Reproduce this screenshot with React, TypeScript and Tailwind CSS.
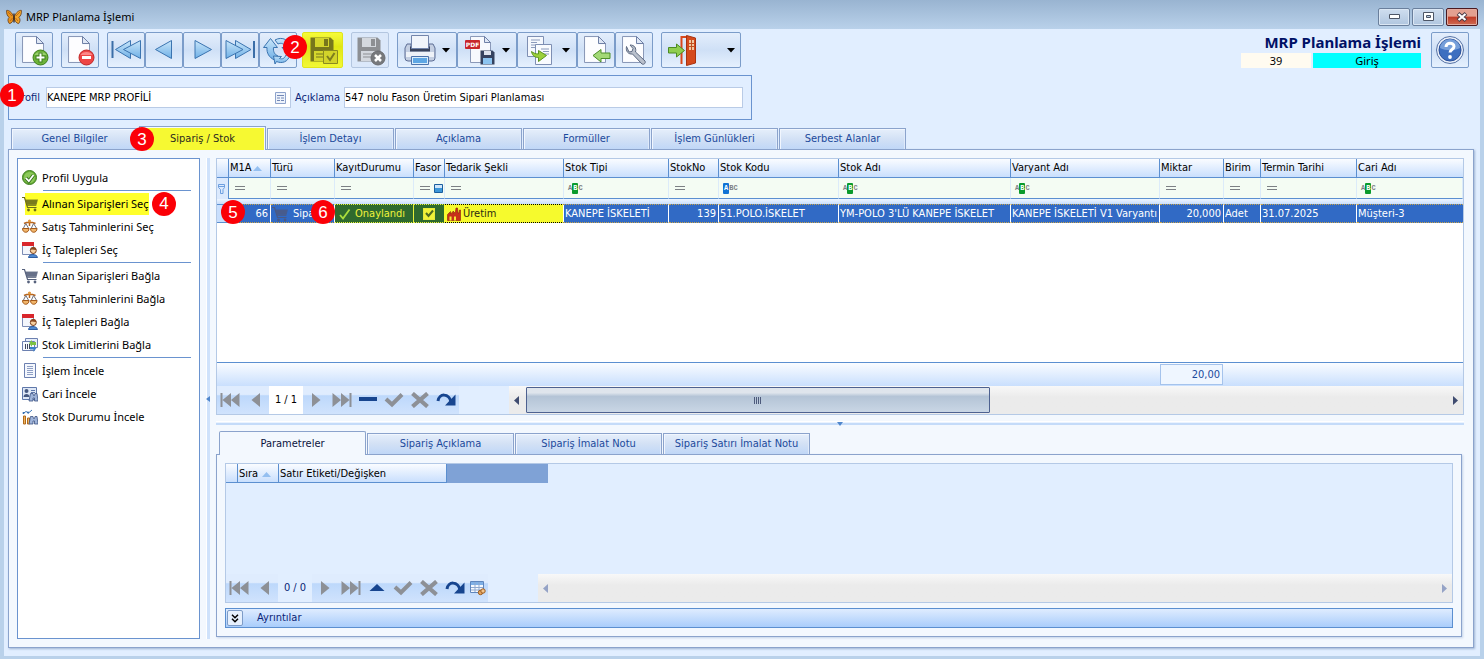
import type { ReactNode } from 'react';

type IconProps = { className?: string };

/* ---------- Small drawings ---------- */

const Butterfly = () => (
  <svg width="16" height="16" viewBox="0 0 16 16" aria-hidden="true">
    <path d="M7.600 7.500C6 3.500 3 1 .6 1.400c-.4 2.600.6 6 2.600 7-1.800 1.200-1.600 4.400.2 6.200C5.800 14.400 7.400 11.500 7.800 9z" fill="#e8931c" stroke="#5a2f10" strokeWidth=".7" />
    <path d="M8.400 7.500C10 3.500 13 1 15.400 1.400c.4 2.600-.6 6-2.600 7 1.800 1.200 1.600 4.400-.2 6.200C10.200 14.400 8.600 11.500 8.200 9z" fill="#f0a52c" stroke="#5a2f10" strokeWidth=".7" />
    <path d="M8 4.500v9" stroke="#2b1a10" strokeWidth="1.200" />
    <path d="M2 3l4 4M14 3l-4 4M4 12l2.500-3M12 12L9.500 9" stroke="#b55a12" strokeWidth=".8" />
  </svg>
);

const Sheet = ({ children }: { children?: ReactNode }) => (
  <svg width="32" height="32" viewBox="0 0 32 32" aria-hidden="true">
    <path d="M4.500 2.500h14l7 7v19h-21z" fill="#f7f9fd" stroke="#8b99b8" />
    <path d="M6 4h12v7h7v16H6z" fill="#fff" opacity=".7" />
    <path d="M18.500 2.500v7h7z" fill="#dfe7f5" stroke="#6f80a6" />
    {children}
  </svg>
);

const NewIcon = () => (
  <Sheet>
    <circle cx="22.500" cy="23.500" r="7.500" fill="#6db33a" stroke="#3f7f1c" />
    <path d="M16.500 21a6.500 5 0 0112 0z" fill="#a5d67c" opacity=".8" />
    <path d="M22.500 18.500v10M17.500 23.500h10" stroke="#3f7f1c" strokeWidth="4" />
    <path d="M22.500 19.500v8M18.500 23.500h8" stroke="#fff" strokeWidth="2" />
  </Sheet>
);

const DeleteIcon = () => (
  <Sheet>
    <circle cx="22.500" cy="23.500" r="7.500" fill="#ee4545" stroke="#c02626" />
    <path d="M16.500 21a6.500 5 0 0112 0z" fill="#f99" opacity=".8" />
    <path d="M18 23.500h9" stroke="#fff" strokeWidth="3" />
  </Sheet>
);

const Blue = () => (
  <defs>
    <linearGradient id="bl" x1="0" y1="0" x2="0" y2="1">
      <stop offset="0" stopColor="#c9e6fa" />
      <stop offset="1" stopColor="#6fb0e6" />
    </linearGradient>
  </defs>
);

const FirstIcon = () => (
  <svg width="32" height="32" viewBox="0 0 32 32" aria-hidden="true">
    <Blue />
    <path d="M2.500 7v17" stroke="#3b6ea8" strokeWidth="2" />
    <path d="M20.500 6.500v18L5.500 15.500z" fill="url(#bl)" stroke="#3b74b0" />
    <path d="M30.500 6.500v18L13.500 15.500z" fill="url(#bl)" stroke="#3b74b0" />
  </svg>
);
const LastIcon = () => (
  <svg width="32" height="32" viewBox="0 0 32 32" aria-hidden="true">
    <path d="M30 7v17" stroke="#3b6ea8" strokeWidth="2" />
    <path d="M11.500 6.500v18L27 15.500z" fill="url(#bl)" stroke="#3b74b0" />
    <path d="M2 6.500v18L19 15.500z" fill="url(#bl)" stroke="#3b74b0" />
  </svg>
);
const PrevIcon = () => (
  <svg width="32" height="32" viewBox="0 0 32 32" aria-hidden="true">
    <path d="M23.500 6.500v18L7.500 15.500z" fill="url(#bl)" stroke="#3b74b0" />
  </svg>
);
const NextIcon = () => (
  <svg width="32" height="32" viewBox="0 0 32 32" aria-hidden="true">
    <path d="M9 6.500v18L25.500 15.500z" fill="url(#bl)" stroke="#3b74b0" />
  </svg>
);
const RefreshIcon = () => (
  <svg width="32" height="32" viewBox="0 0 32 32" aria-hidden="true">
    <g fill="url(#bl)" stroke="#3b74b0" strokeLinejoin="round">
      <path d="M8.500 4.500l7 9h-4c-.5 4 1 7 4.500 8.500l-3.500 4C7 23.500 4.500 19 5 13.500H1.500z" />
      <path d="M13 6c7-4 15 0 15.500 7.500H31L26.500 20 20 13.500h3.500c-1-4-4.500-5-7.500-3.500z" />
      <path d="M28 21c-2 7-8 9-13.500 6.500L13 30l-1.500-8 8 .5-2 2c3 1 5 0 6.500-3.500z" />
    </g>
  </svg>
);

const Floppy = ({ body, label, children }: { body: string; label: string; children: ReactNode }) => (
  <svg width="32" height="32" viewBox="0 0 32 32" aria-hidden="true">
    <path d="M3.500 3.500h20l3 3v21h-23z" fill={body} />
    <path d="M8 4h14v9H8z" fill={label} />
    <path d="M17 5h4v7h-4z" fill={body} />
    <path d="M7 17h16v10H7z" fill={label} />
    <path d="M9 20h12M9 23h12" stroke={body} />
    {children}
  </svg>
);
const SaveIcon = () => (
  <Floppy body="#77771c" label="#d5d62c">
    <path d="M16.500 16.500h14v13h-14z" fill="#d2d32a" stroke="#8a8a20" />
    <path d="M20 22l3 4 4.500-7" fill="none" stroke="#7d7d1e" strokeWidth="2" />
  </Floppy>
);
const CancelIcon = () => (
  <Floppy body="#8d8f93" label="#d4d8de">
    <circle cx="24" cy="24" r="7" fill="#77797c" stroke="#6a6c70" />
    <path d="M21 21l6 6M27 21l-6 6" stroke="#fff" strokeWidth="2.500" />
  </Floppy>
);

const PrintIcon = () => (
  <svg width="32" height="32" viewBox="0 0 32 32" aria-hidden="true">
    <path d="M3 10h4v4h18v-4h4l2 4v10q0 3-3 3H4q-3 0-3-3V14z" fill="#c4cfe2" stroke="#5c6d94" />
    <path d="M6 12.500h20v5H6z" fill="#39435c" />
    <path d="M7.500 1.500h17v13h-17z" fill="#f1f5fb" stroke="#7385ab" />
    <path d="M2 18h28v5H2z" fill="#eef2f8" />
    <path d="M7.500 22.500h17v8h-17z" fill="#dbeefc" stroke="#4d73ab" />
    <path d="M9 24h14v5H9z" fill="#5ea7e4" />
  </svg>
);
const PdfIcon = () => (
  <svg width="32" height="32" viewBox="0 0 32 32" aria-hidden="true">
    <path d="M6.500 2.500h14l6 6v20h-20z" fill="#f7f9fd" stroke="#8b99b8" />
    <path d="M20.500 2.500v6h6z" fill="#dfe7f5" stroke="#6f80a6" />
    <rect x="1" y="6" width="15" height="9" rx="1" fill="#c8252c" />
    <text x="8.500" y="13" fontSize="6" fontWeight="700" textAnchor="middle" fill="#fff" fontFamily="DejaVu Sans">PDF</text>
    <path d="M16.500 16.500h12l2 2v12h-14z" fill="#35425f" />
    <path d="M20 17h7v4h-7z" fill="#dde3ee" />
    <path d="M19 24h9v6h-9z" fill="#8cc4f0" />
  </svg>
);
const CopyIcon = () => (
  <svg width="32" height="32" viewBox="0 0 32 32" aria-hidden="true">
    <path d="M3.500 2.500h16v20h-16z" fill="#f5f8fd" stroke="#7e8fb3" />
    <path d="M7 6h9M7 8.500h6M7 11h9M7 13.500h6" stroke="#8b9abb" />
    <path d="M11.500 10.500h16v20h-16z" fill="#f9fbfe" stroke="#7e8fb3" />
    <path d="M17 15h8M19 17.500h6M20 20h5" stroke="#8b9abb" />
    <path d="M7.500 17.500c1 5 4 6 7 6v4l8-6-8-5v3.500c-3 0-5-1-7-2.500z" fill="#9bcf3a" stroke="#5a9420" />
  </svg>
);
const ImportIcon = () => (
  <Sheet>
    <path d="M13 21.500l8-6v3.500h9v5.500h-9V28z" fill="#a3d977" stroke="#4d8f2a" />
  </Sheet>
);
const ToolsIcon = () => (
  <Sheet>
    <path d="M8.500 12.500c-1 5 2 8 6 7.500l9.500 10c2 1 4-1 3-3L17.500 18c1-4-1-7-5.500-7l3 3.500-1 3-3 .5z" fill="#b9c0cc" stroke="#5c6880" />
  </Sheet>
);
const DoorIcon = () => (
  <svg width="32" height="32" viewBox="0 0 32 32" aria-hidden="true">
    <path d="M14.500 30V3h7" fill="none" stroke="#d9481c" strokeWidth="2" />
    <path d="M19.500 1.500l9 2.500v25l-9 2.500z" fill="#d54a1c" stroke="#a83210" />
    <path d="M22 6h5v10h-5z" fill="#f2c9a2" />
    <path d="M24.500 6v10M22 9.500h5M22 12.500h5" stroke="#c05020" />
    <path d="M1.500 13.500h8V10l8 6.500-8 6.500v-4h-8z" fill="#8fce4f" stroke="#4b8a22" />
  </svg>
);
const HelpIcon = () => (
  <svg width="32" height="32" viewBox="0 0 32 32" aria-hidden="true">
    <circle cx="16" cy="16" r="13.500" fill="#e8eef8" stroke="#5673a6" />
    <circle cx="16" cy="16" r="11" fill="#3d6fc0" stroke="#2a509a" />
    <path d="M6 14a10 9 0 0120 0c-6 3-14 3-20 0z" fill="#8fb4e6" opacity=".7" />
    <path d="M12 13c0-5 8-5 8-.5 0 3-4 3-4 6" fill="none" stroke="#fff" strokeWidth="3" />
    <circle cx="16" cy="23" r="1.900" fill="#fff" />
  </svg>
);

const Caret = () => (
  <svg width="8" height="5" viewBox="0 0 8 5" aria-hidden="true">
    <path d="M0 0h8L4 4.500z" fill="#000" />
  </svg>
);

/* ---------- 16px icons ---------- */

const ApplyIcon = () => (
  <svg width="16" height="16" viewBox="0 0 16 16" aria-hidden="true">
    <circle cx="7.500" cy="7.500" r="7" fill="#69ad36" stroke="#3d7f1e" />
    <circle cx="7.500" cy="7.500" r="5.500" fill="#8cc95a" />
    <path d="M3.800 8l3 3.200L11.500 5" fill="none" stroke="#35701a" strokeWidth="3.500" />
    <path d="M3.800 8l3 3.200L11.500 5" fill="none" stroke="#fff" strokeWidth="1.800" />
  </svg>
);
const CartIcon = ({ color = '#56617c' }: { color?: string }) => (
  <svg width="16" height="16" viewBox="0 0 16 16" aria-hidden="true" className="shrink-0">
    <path d="M0 1.500h2.500l3 10h9" fill="none" stroke={color} strokeWidth="1.200" />
    <path d="M3.200 3.500H16l-1.800 6.500H5.200z" fill={color} opacity=".8" />
    <path d="M4 5h11M4.500 7h10" stroke={color} />
    <circle cx="6.500" cy="14" r="1.400" fill={color} />
    <circle cx="13" cy="14" r="1.400" fill={color} />
  </svg>
);
const ScaleIcon = () => (
  <svg width="16" height="16" viewBox="0 0 16 16" aria-hidden="true">
    <path d="M7.500 1v6M2 4.500c3-1.500 8-1.500 11.500 0" fill="none" stroke="#b9651c" strokeWidth="1.500" />
    <path d="M3.800 4.500L1 10h6zM11.500 4.500L9 10h6z" fill="none" stroke="#6b6f7c" />
    <path d="M.5 9.500h6.500c0 5-6.500 5-6.500 0zM8.500 9.500H15c0 5-6.500 5-6.500 0z" fill="#f0b56a" stroke="#a55a1a" />
    <circle cx="7.500" cy="2" r="1.500" fill="#e39a3e" />
  </svg>
);
const RequestIcon = () => (
  <svg width="16" height="16" viewBox="0 0 16 16" aria-hidden="true">
    <path d="M.5.5h11v12H.5z" fill="#f3f6fc" stroke="#7c8cb5" />
    <path d="M0 0h12v4H0z" fill="#d9262c" />
    <path d="M6.500 15.500c0-4 8.500-4 9 0z" fill="#4f8ad2" stroke="#2f5da0" />
    <circle cx="11.300" cy="8.500" r="3" fill="#f5cfa0" stroke="#7a3f1c" />
    <path d="M8.300 8c0-4 6-4 6 0-2 .5-4-1.500-6 0z" fill="#8a4a22" />
  </svg>
);
const LimitIcon = () => (
  <svg width="16" height="16" viewBox="0 0 16 16" aria-hidden="true">
    <path d="M3.500 1.500h12v9h-12z" fill="#e7eefa" stroke="#6c80b0" />
    <path d="M.5 4.500h12v9H.5z" fill="#f6f9fe" stroke="#6c80b0" />
    <path d="M3.500 7v5M5.500 7v5M7.500 7v5" stroke="#3f4860" />
    <path d="M7 6l3-3v2h4v3h-4v2z" fill="#7cc243" />
    <path d="M14.500 11l-3 4v-2.500H8V10h4z" fill="#3b7fc8" />
  </svg>
);
const ListIcon = () => (
  <svg width="16" height="16" viewBox="0 0 16 16" aria-hidden="true">
    <path d="M2.500.5h11v14h-11z" fill="#f4f7fd" stroke="#6c80b0" />
    <path d="M5 3.500h6M5 5.500h6M5 7.500h6M5 9.500h6M5 11.500h6" stroke="#8f9fc4" />
  </svg>
);
const Binoculars = () => (
  <g>
    <path d="M8.500 7.500h2.500l.5 2h1l.5-2H15l1 7.500h-3.500v-3h-1.500v3H7z" fill="#9fb4d9" stroke="#3d5484" strokeWidth=".8" />
  </g>
);
const CardIcon = () => (
  <svg width="16" height="16" viewBox="0 0 16 16" aria-hidden="true">
    <path d="M.5 1.500h14v12H.5z" fill="#dfe8f6" stroke="#5f78aa" />
    <circle cx="4.500" cy="5" r="2" fill="#46587f" />
    <path d="M1.500 11c0-4 6-4 6 0z" fill="#46587f" />
    <path d="M9 4.500h4M9 6.500h4" stroke="#5f78aa" />
    <Binoculars />
  </svg>
);
const StockIcon = () => (
  <svg width="16" height="16" viewBox="0 0 16 16" aria-hidden="true">
    <path d="M1.500 7h2v8h-2z" fill="#f0b45c" stroke="#b06a1c" />
    <path d="M5.500 9h2v6h-2z" fill="#f0b45c" stroke="#b06a1c" />
    <path d="M1 4.500l3-2 2.500 1.500L10 1" fill="none" stroke="#3c77b8" />
    <circle cx="1.500" cy="4" r="1" fill="#2f68ac" />
    <circle cx="6" cy="3.500" r="1" fill="#2f68ac" />
    <Binoculars />
  </svg>
);
const FactoryIcon = () => (
  <svg width="14" height="14" viewBox="0 0 14 14" aria-hidden="true">
    <path d="M.5 13.500v-6l3-3v2.500l3-3v2.500l2-2L9 1h1.500l.5 5 1 0L12.500 3h1v10.500z" fill="#c8301a" stroke="#8a1c0c" strokeWidth=".6" />
    <path d="M2.500 9.500h2v4h-2zM7 9.500h2v4H7z" fill="#f6ea35" />
  </svg>
);

/* ---------- Navigator glyphs ---------- */

const GREY = '#8d9096';
const NAVY = '#17458f';
const Glyph = ({ children }: { children: ReactNode }) => (
  <svg width="20" height="16" viewBox="0 0 20 16" aria-hidden="true">{children}</svg>
);
const GFirst = () => <Glyph><path d="M.5 1h2v14h-2zM11 1v14L2.500 8zM19.500 1v14L11 8z" fill={GREY} /></Glyph>;
const GLast = () => <Glyph><path d="M17.500 1h2v14h-2zM9 1v14l8.500-7zM.5 1v14L9 8z" fill={GREY} /></Glyph>;
const GPrev = () => <Glyph><path d="M14 1v14L5.500 8z" fill={GREY} /></Glyph>;
const GNext = () => <Glyph><path d="M6 1v14l8.500-7z" fill={GREY} /></Glyph>;
const GMinus = () => <Glyph><path d="M1 5h18v4H1z" fill={NAVY} /></Glyph>;
const GUp = () => <Glyph><path d="M2.500 11h15L10 4z" fill={NAVY} /></Glyph>;
const GCheck = () => <Glyph><path d="M2 7l6 5.500L18 2.500" fill="none" stroke={GREY} strokeWidth="4" /></Glyph>;
const GCross = () => <Glyph><path d="M2.500 1.500l15 13M17.500 1.500l-15 13" stroke={GREY} strokeWidth="4.200" /></Glyph>;
const GRedo = () => (
  <Glyph>
    <path d="M2 9c1-8 11-8 13 1" fill="none" stroke={NAVY} strokeWidth="3" />
    <path d="M19.500 2.500V13.500H9z" fill={NAVY} />
  </Glyph>
);
const GTable = () => (
  <svg width="16" height="16" viewBox="0 0 16 16" aria-hidden="true">
    <path d="M.5 1.500h13v11H.5z" fill="#f6f9fe" stroke="#5f86bd" />
    <path d="M1 2h12v3H1z" fill="#7fb0e6" />
    <path d="M1 7.500h12M1 10h12M5 2v10M9 2v10" stroke="#8fa9cf" />
    <circle cx="10.500" cy="12.500" r="2.200" fill="#e8a862" stroke="#9c5a1c" />
    <circle cx="13" cy="11" r="2.200" fill="#f2c48c" stroke="#9c5a1c" />
  </svg>
);

/* ---------- Shared parts ---------- */

const Badge = ({ n, className }: { n: number; className: string }) => (
  <span
    className={
      "pointer-events-none absolute z-20 flex size-6 items-center justify-center rounded-full bg-[#fb0007] font-['Liberation_Sans',sans-serif] text-[17px] leading-none text-white " +
      className
    }
  >
    {n}
  </span>
);

const toolCls =
  'flex h-9 cursor-default items-center justify-center rounded-xs border border-[#7b9cc9] bg-linear-to-b from-[#e4eefc] via-[#cfe0f6] to-[#e6f1fe] ';

const Tool = ({ label, children, drop, wide }: { label: string; children: ReactNode; drop?: boolean; wide?: boolean }) => (
  <button type="button" aria-label={label} className={toolCls + (wide ? 'w-20' : drop ? 'w-15' : 'w-9.5')}>
    {children}
    {drop && (
      <span className={wide ? 'pl-7' : 'pl-1.5'}>
        <Caret />
      </span>
    )}
  </button>
);

const NavButton = ({ label, children }: { label: string; children: ReactNode }) => (
  <button type="button" aria-label={label} className="flex h-7 w-6.5 cursor-default items-center justify-center">
    {children}
  </button>
);

const navBg = 'flex bg-linear-to-b from-[#dfecfe] from-30% via-[#bdd8fb] via-35% to-[#d0e3fd]';

const ArrowL = ({ className }: IconProps) => (
  <svg width="5" height="9" viewBox="0 0 5 9" aria-hidden="true" className={className}><path d="M5 0v9L0 4.500z" fill="currentColor" /></svg>
);
const ArrowR = ({ className }: IconProps) => (
  <svg width="5" height="9" viewBox="0 0 5 9" aria-hidden="true" className={className}><path d="M0 0v9l5-4.500z" fill="currentColor" /></svg>
);
const SortMark = () => (
  <svg width="9" height="5" viewBox="0 0 9 5" aria-hidden="true" className="shrink-0"><path d="M0 5h9L4.500 0z" fill="#94bff0" /></svg>
);

const tabCls =
  'flex cursor-default items-center justify-center border border-b-0 border-[#8ba3cc] bg-linear-to-b from-[#e6effb] via-[#d3e1f5] via-49% text-[#1c4a9c] shadow-[inset_1px_1px_0_#f1f6fe,inset_-1px_0_0_#dfeafa] ';
const tabShade = 'to-[#c0d7f7] ';

/* ---------- Side menu ---------- */

const menu: { icon: ReactNode; text: string; active?: boolean }[][] = [
  [{ icon: <ApplyIcon />, text: 'Profil Uygula' }],
  [
    { icon: <CartIcon color="#6b6d1c" />, text: 'Alınan Siparişleri Seç', active: true },
    { icon: <ScaleIcon />, text: 'Satış Tahminlerini Seç' },
    { icon: <RequestIcon />, text: 'İç Talepleri Seç' },
  ],
  [
    { icon: <CartIcon />, text: 'Alınan Siparişleri Bağla' },
    { icon: <ScaleIcon />, text: 'Satış Tahminlerini Bağla' },
    { icon: <RequestIcon />, text: 'İç Talepleri Bağla' },
    { icon: <LimitIcon />, text: 'Stok Limitlerini Bağla' },
  ],
  [
    { icon: <ListIcon />, text: 'İşlem İncele' },
    { icon: <CardIcon />, text: 'Cari İncele' },
    { icon: <StockIcon />, text: 'Stok Durumu İncele' },
  ],
];

const SideMenu = () => (
  <nav className="w-[183px] shrink-0 border border-[#6a93cf] bg-white pt-[7px] font-['Noto_Sans',sans-serif] text-black">
    {menu.map((group, i) => (
      <ul key={i}>
        {i > 0 && <li aria-hidden="true" className="mr-2 ml-[25px] flex h-[3px] items-center"><span className="h-px w-full bg-[#6a93cf]" /></li>}
        {group.map((m) => (
          <li key={m.text} className="relative flex h-[23px] items-center">
            <button
              type="button"
              className={
                'ml-1 flex h-[22px] cursor-default items-center gap-1 whitespace-nowrap ' + (m.active ? 'bg-linear-to-r from-white from-2% to-[#ffff2b] to-2%' : '')
              }
            >
              {m.icon}
              {m.text}
            </button>
            {m.active && <Badge n={4} className="left-[134px]" />}
          </li>
        ))}
      </ul>
    ))}
  </nav>
);

/* ---------- Order grid ---------- */

type Col = { title: string; w: string; filter: 'eq' | 'b' | 'a' | 'check' };
const cols: Col[] = [
  { title: 'M1A', w: 'w-[42px]', filter: 'eq' },
  { title: 'Türü', w: 'w-[64px]', filter: 'eq' },
  { title: 'KayıtDurumu', w: 'w-[79px]', filter: 'eq' },
  { title: 'Fasor', w: 'w-[31px]', filter: 'check' },
  { title: 'Tedarik Şekli', w: 'w-[119px]', filter: 'eq' },
  { title: 'Stok Tipi', w: 'w-[105px]', filter: 'b' },
  { title: 'StokNo', w: 'w-[50px]', filter: 'eq' },
  { title: 'Stok Kodu', w: 'w-[120px]', filter: 'a' },
  { title: 'Stok Adı', w: 'w-[172px]', filter: 'b' },
  { title: 'Varyant Adı', w: 'w-[149px]', filter: 'b' },
  { title: 'Miktar', w: 'w-[64px]', filter: 'eq' },
  { title: 'Birim', w: 'w-[37px]', filter: 'eq' },
  { title: 'Termin Tarihi', w: 'w-[96px]', filter: 'eq' },
  { title: 'Cari Adı', w: '', filter: 'b' },
];

const headCls = 'h-[19px] overflow-hidden border-b border-[#5b8fd0] bg-linear-to-b from-[#fafcff] to-[#c9dffd] p-0 pl-px text-left font-normal whitespace-nowrap text-black ';

const EqMark = () => (
  <svg width="10" height="4" viewBox="0 0 10 4" aria-hidden="true"><path d="M0 .5h10M0 3.500h10" stroke="#7c8084" /></svg>
);
const AbcMark = ({ on }: { on: 'a' | 'b' }) => (
  <span className="flex h-[11px] items-center font-['Liberation_Mono',monospace] text-[7px] leading-[11px] font-bold text-[#7c8084]">
    <span className={on === 'a' ? 'rounded-[1px] bg-[#1173d4] px-px text-white' : ''}>A</span>
    <span className={on === 'b' ? 'rounded-[1px] bg-[#0a9b2c] px-px text-white' : ''}>B</span>
    <span>C</span>
  </span>
);

const Filter = ({ kind }: { kind: Col['filter'] }) => {
  if (kind === 'a' || kind === 'b') return <AbcMark on={kind} />;
  if (kind === 'check')
    return (
      <span className="flex items-center gap-1 pl-0.5">
        <EqMark />
        <svg width="9" height="11" viewBox="0 0 9 11" aria-hidden="true"><path d="M.5 1.500h8v8h-8z" fill="#cfe6fb" stroke="#1b5f9e" /><path d="M1 5h7v4H1z" fill="#3d97d8" /></svg>
      </span>
    );
  return <span className="block pl-0.5"><EqMark /></span>;
};

const cell = 'h-[19px] overflow-hidden border-y border-dotted border-y-[#c8a44a] p-0 whitespace-nowrap [border-right-style:solid] ';
const blue = cell + 'border-r border-r-white bg-[#316ac5] pl-px text-white ';

const OrderGrid = () => (
  <table className="w-full table-fixed border-separate border-spacing-0 leading-[14px]">
    <colgroup>
      <col className="w-[12px]" />
      {cols.map((c) => <col key={c.title} className={c.w} />)}
    </colgroup>
    <thead>
      <tr>
        <th className={headCls + 'border-r'} aria-label="Satır" />
        {cols.map((c, i) => (
          <th key={c.title} className={headCls + (i < cols.length - 1 ? 'border-r' : '')}>
            {i === 0 ? (
              <span className="flex items-center gap-px">
                M1A
                <SortMark />
              </span>
            ) : (
              c.title
            )}
          </th>
        ))}
      </tr>
      <tr>
        <td className="h-[21px] border-r border-[#5b8fd0] bg-[#dbe9fd] p-0">
          <svg width="10" height="10" viewBox="0 0 10 10" aria-hidden="true"><path d="M1.500.5h6v3L6 5.500v4H3.500v-4L1.500 3.500zM1.500 2.500h6" fill="none" stroke="#6d9fe0" /></svg>
        </td>
        {cols.map((c) => (
          <td key={c.title} className="h-[21px] overflow-hidden border-r border-b border-r-[#dcebf9] border-b-[#5b8fd0] bg-[#f4fcf3] p-0 pl-1">
            <Filter kind={c.filter} />
          </td>
        ))}
      </tr>
      <tr>
        <td colSpan={15} className="h-[5px] bg-linear-to-b from-[#eef5ff] to-[#c9dffd] p-0" />
      </tr>
    </thead>
    <tbody>
      <tr>
        <td className="border-y border-r border-[#5b8fd0] bg-[#c9dffd] p-0" />
        <td className={blue + 'pr-0.5 text-right'}>66</td>
        <td className={blue}>
          <span className="flex items-center gap-[5px]"><CartIcon color="#4a5a86" />Sipariş</span>
        </td>
        <td className={cell + 'border-r border-y-[#e8f03a] border-r-[#e8f03a] bg-[#2f6a2e] pl-1 text-[#f0f23c]'}>
          <span className="flex items-center gap-1">
            <svg width="12" height="12" viewBox="0 0 12 12" aria-hidden="true"><path d="M1 7l3 3.500L10.500 1.500" fill="none" stroke="#a9de3c" strokeWidth="1.800" /></svg>
            Onaylandı
          </span>
        </td>
        <td className={cell + 'border-r border-y-[#e8f03a] border-r-[#f6f82f] bg-[#2f6a2e] text-center'}>
          <label className="relative inline-flex size-3 items-center justify-center border border-[#e6e83a] bg-[#f0f238] align-middle">
            <input type="checkbox" defaultChecked aria-label="Fason" className="absolute inset-0 opacity-0" />
            <svg width="9" height="9" viewBox="0 0 9 9" aria-hidden="true"><path d="M1 4l2.500 3L8 1.500" fill="none" stroke="#4f6a20" strokeWidth="2" /></svg>
          </label>
        </td>
        <td className={cell + 'border-r border-y-black border-r-white bg-[#f6fa2d] pl-0.5 text-[#2a2a10]'}>
          <span className="flex items-center gap-0.5"><FactoryIcon />Üretim</span>
        </td>
        <td className={blue}>KANEPE İSKELETİ</td>
        <td className={blue + 'pr-0.5 text-right'}>139</td>
        <td className={blue}>51.POLO.İSKELET</td>
        <td className={blue}>YM-POLO 3'LÜ KANEPE İSKELET</td>
        <td className={blue}>KANEPE İSKELETİ V1 Varyantı</td>
        <td className={blue + 'pr-0.5 text-right'}>20,000</td>
        <td className={blue}>Adet</td>
        <td className={blue}>31.07.2025</td>
        <td className={cell + 'bg-[#316ac5] pl-px text-white'}>Müşteri-3</td>
      </tr>
    </tbody>
  </table>
);

/* ---------- Page ---------- */

const mainTabs = ['Genel Bilgiler', 'Sipariş / Stok', 'İşlem Detayı', 'Açıklama', 'Formüller', 'İşlem Günlükleri', 'Serbest Alanlar'];
const subTabs = ['Parametreler', 'Sipariş Açıklama', 'Sipariş İmalat Notu', 'Sipariş Satırı İmalat Notu'];

export default function App() {
  return (
    <div className="flex min-h-screen w-full flex-col bg-[#b9d1ea] font-['DejaVu_Sans_Condensed','DejaVu_Sans',sans-serif] text-[11px] leading-[14px]">
      <header className="flex h-[29px] items-center bg-linear-to-b from-[#99b4d1] to-[#b9d1ea] pt-1 pr-[6px] pl-[6px]">
        <Butterfly />
        <h1 className="ml-1 flex-1 font-['Noto_Sans',sans-serif] text-[11px] text-black">MRP Planlama İşlemi</h1>
        <div className="flex gap-0.5">
          <button type="button" aria-label="Simge durumuna küçült" className="flex h-[18px] w-8 items-center justify-center rounded-xs border border-[#6a7f9c] bg-linear-to-b from-[#cfdeef] to-[#b0c6df] shadow-[inset_0_0_0_1px_#dbe7f4]">
            <svg width="11" height="5" viewBox="0 0 11 5" aria-hidden="true"><path d="M.5.5h10v4H.5z" fill="#fff" stroke="#4d5666" /></svg>
          </button>
          <button type="button" aria-label="Ekranı kapla" className="flex h-[18px] w-8 items-center justify-center rounded-xs border border-[#6a7f9c] bg-linear-to-b from-[#cfdeef] to-[#b0c6df] shadow-[inset_0_0_0_1px_#dbe7f4]">
            <svg width="11" height="9" viewBox="0 0 11 9" aria-hidden="true"><path d="M.5.5h10v8H.5z" fill="#fff" stroke="#4d5666" /><path d="M3.500 3.500h4v2h-4z" fill="#b9cce2" stroke="#4d5666" /></svg>
          </button>
          <button type="button" aria-label="Kapat" className="flex h-[18px] w-8 items-center justify-center rounded-xs border border-[#4b1a20] bg-linear-to-b from-[#e3a090] from-45% via-[#bf3a26] via-50% to-[#cf6a52] shadow-[inset_0_0_0_1px_#e3ab9f]">
            <svg width="12" height="10" viewBox="0 0 12 10" aria-hidden="true"><path d="M2 1.500l8 7M10 1.500l-8 7" stroke="#4b3a44" strokeWidth="4" /><path d="M2.500 2l7 6M9.500 2l-7 6" stroke="#fff" strokeWidth="2.200" /></svg>
          </button>
        </div>
      </header>

      <main className="relative mx-1 mb-[3px] flex flex-1 flex-col bg-[#e1eeff] pt-[3px] pr-1.5 pb-2 pl-1">
        {/* Toolbar */}
        <div className="flex items-start pl-[7px]">
          <div className="flex gap-2">
            <Tool label="Yeni"><NewIcon /></Tool>
            <Tool label="Sil"><DeleteIcon /></Tool>
            <div className="relative flex">
              <Tool label="İlk"><FirstIcon /></Tool>
              <Tool label="Önceki"><PrevIcon /></Tool>
              <Tool label="Sonraki"><NextIcon /></Tool>
              <Tool label="Son"><LastIcon /></Tool>
              <Tool label="Yenile"><RefreshIcon /></Tool>
              <Badge n={2} className="top-[3px] left-[176px]" />
            </div>
            <button type="button" aria-label="Kaydet" className="-ml-[3px] flex h-9 w-[41px] cursor-default items-center justify-center rounded-xs border border-[#dfe51c] bg-linear-to-b from-[#f6fb38] via-[#e0e614] via-40% to-[#f2f834]">
              <SaveIcon />
            </button>
            <button type="button" aria-label="Vazgeç" className="flex h-9 w-[38px] cursor-default items-center justify-center rounded-xs border border-[#b3c6e0] bg-[#dbe8fa]">
              <CancelIcon />
            </button>
            <div className="flex">
              <Tool label="Yazdır" drop><PrintIcon /></Tool>
              <Tool label="PDF kaydet" drop><PdfIcon /></Tool>
              <Tool label="Kopyala" drop><CopyIcon /></Tool>
              <Tool label="Aktar"><ImportIcon /></Tool>
              <Tool label="Araçlar"><ToolsIcon /></Tool>
            </div>
            <Tool label="Çıkış" drop wide><DoorIcon /></Tool>
          </div>
          <div className="ml-auto flex gap-2.5 pr-[5px]">
            <div className="w-[180px] font-['Noto_Sans',sans-serif]">
              <p className="text-right text-[15px] leading-[21px] font-bold whitespace-nowrap text-[#001166]">MRP Planlama İşlemi</p>
              <div className="flex gap-0.5 text-center text-black">
                <span className="w-[70px] bg-[#fffbf0] leading-[15px]">39</span>
                <span className="flex-1 bg-[#00ffff] leading-[15px]">Giriş</span>
              </div>
            </div>
            <Tool label="Yardım"><HelpIcon /></Tool>
          </div>
        </div>

        {/* Profile */}
        <div className="relative mt-[7px] flex h-[45px] w-[744px] items-center border border-[#6a93cf] pr-2 pl-1.5 text-[#0b1f77]">
          <label htmlFor="profil" className="w-[25px] text-right whitespace-nowrap">Profil</label>
          <div className="ml-1.5 flex h-[21px] w-[245px] items-center border border-[#b9cbe6] bg-white pr-1">
            <input id="profil" defaultValue="KANEPE MRP PROFİLİ" className="h-full min-w-0 flex-1 text-black outline-none" />
            <button type="button" aria-label="Profil seç">
              <svg width="11" height="12" viewBox="0 0 11 12" aria-hidden="true"><path d="M.5.5h10v11H.5z" fill="#eef3fb" stroke="#8ea3cc" /><path d="M2 3.500h7M2 6h3M6 6h3M2 8.500h3M6 8.500h3" stroke="#7388b6" /></svg>
            </button>
          </div>
          <label htmlFor="aciklama" className="mx-1 whitespace-nowrap">Açıklama</label>
          <input id="aciklama" defaultValue="547 nolu Fason Üretim Sipari Planlaması" className="h-[21px] min-w-0 flex-1 border border-[#b9cbe6] bg-white text-black outline-none" />
          <Badge n={1} className="top-[7px] -left-[9px]" />
        </div>

        {/* Main tabs */}
        <div role="tablist" className="relative z-10 mt-1.5 -mb-px flex items-end gap-px pl-[3px]">
          {mainTabs.map((t, i) =>
            i === 1 ? (
              <button
                key={t}
                type="button"
                role="tab"
                aria-selected="true"
                className="relative h-6 w-[127px] cursor-default border border-b-0 border-[#8ba3cc] bg-[#f6f932] text-[#2a2a20] shadow-[inset_-1px_1px_0_#f3f8fe]"
              >
                {t}
                <Badge n={3} className="top-0 -left-[10px]" />
              </button>
            ) : (
              <button key={t} type="button" role="tab" aria-selected="false" className={tabCls + tabShade + 'mb-px h-[21px] w-[127px]'}>
                {t}
              </button>
            ),
          )}
        </div>

        {/* Main panel */}
        <div className="flex flex-1 border border-[#8ba3cc] bg-[#f3f8fe] p-2 pr-[9px] shadow-[1px_1px_2px_#9fb4d4]">
          <SideMenu />
          <div className="flex w-4 shrink-0 items-center justify-center">
            <span className="relative flex h-full w-[3px] items-center bg-[#cfe2fb] shadow-[-1px_0_0_#fff]">
              <span className="absolute -left-px text-[#4f86cc]">
                <svg width="4" height="6" viewBox="0 0 4 6" aria-hidden="true"><path d="M4 0v6L0 3z" fill="currentColor" /></svg>
              </span>
            </span>
          </div>

          <div className="flex min-w-0 flex-1 flex-col">
            {/* Orders */}
            <section className="relative flex flex-1 flex-col border border-[#b4c9e6] bg-white">
              <OrderGrid />
              <Badge n={5} className="top-[41px] left-[4px]" />
              <Badge n={6} className="top-[41px] left-[94px]" />
              <div className="mt-auto flex h-6 items-center border-t border-[#5b8fd0] bg-linear-to-b from-[#fafcff] to-[#c9dffd] pl-[943px]">
                <output className="h-[21px] w-[63px] border border-[#a5c3ec] bg-[#eff6ff] pr-0.5 text-right leading-[20px] text-[#1c4a9c]">20,00</output>
              </div>
              <div className="flex h-7 bg-[#e1eeff]">
                <div className={navBg}>
                  <NavButton label="İlk kayıt"><GFirst /></NavButton>
                  <NavButton label="Önceki kayıt"><GPrev /></NavButton>
                  <span className="w-[34px] bg-white text-center leading-[28px] text-black">1 / 1</span>
                  <NavButton label="Sonraki kayıt"><GNext /></NavButton>
                  <NavButton label="Son kayıt"><GLast /></NavButton>
                  <NavButton label="Kaydı sil"><GMinus /></NavButton>
                  <NavButton label="Onayla"><GCheck /></NavButton>
                  <NavButton label="İptal"><GCross /></NavButton>
                  <NavButton label="Yenile"><GRedo /></NavButton>
                </div>
                <div className="ml-[50px] flex flex-1 items-center bg-linear-to-b from-[#f8f8f8] to-[#ebebeb] to-40% px-[5px] text-[#3f4c70]">
                  <ArrowL />
                  <div className="mx-[7px] flex-1">
                    <div className="flex h-[26px] w-[464px] items-center justify-center rounded-[1px] border border-[#4d6190] bg-linear-to-b from-[#dfe5ec] from-20% via-[#b4c4d6] via-35% to-[#c9d6e5]">
                      <svg width="8" height="7" viewBox="0 0 8 7" aria-hidden="true"><path d="M.5 0v7M2.500 0v7M4.500 0v7M6.500 0v7" stroke="#4d5a7c" /></svg>
                    </div>
                  </div>
                  <ArrowR />
                </div>
              </div>
            </section>

            {/* Splitter */}
            <div className="mt-1.5 flex h-[4px] justify-center border-t border-b-2 border-t-white border-b-[#c4dbf9] bg-[#eaf3ff]">
              <svg width="6" height="4" viewBox="0 0 6 4" aria-hidden="true"><path d="M0 0h6L3 4z" fill="#4f86cc" /></svg>
            </div>

            {/* Detail tabs */}
            <div role="tablist" className="relative z-10 mt-1.5 -mb-px flex items-end gap-px pl-[3px]">
              {subTabs.map((t, i) => (
                <button
                  key={t}
                  type="button"
                  role="tab"
                  aria-selected={i === 0}
                  className={
                    i === 0
                      ? 'h-6 w-[147px] cursor-default rounded-t-xs border border-b-0 border-[#8ba3cc] bg-[#f3f8fe] text-[#0b1440]'
                      : tabCls + tabShade + 'mb-px h-[21px] w-[147px]'
                  }
                >
                  {t}
                </button>
              ))}
            </div>
            <section className="mr-0.5 mb-0.5 border border-[#8ba3cc] bg-[#f3f8fe] p-2 shadow-[1px_1px_2px_#c3d3ea]">
              <div className="flex h-[140px] flex-col justify-between border border-[#b4c9e6] bg-[#e1eeff]">
                <div className="flex h-[19px]">
                  <table className="h-[19px] border-separate border-spacing-0 leading-[16px]">
                    <thead>
                      <tr>
                        <th className={headCls + 'w-[12px] border-r'} aria-label="Satır" />
                        <th className={headCls + 'w-[41px] border-r'}>
                          <span className="flex items-center gap-1 pt-0.5">Sıra <SortMark /></span>
                        </th>
                        <th className={headCls + 'w-[168px] border-r'}>
                          <span className="block pt-0.5">Satır Etiketi/Değişken</span>
                        </th>
                      </tr>
                    </thead>
                  </table>
                  <span className="w-[101px] bg-[#7fa2d6]" />
                </div>
                <div className="flex h-7">
                  <div className={navBg}>
                    <NavButton label="İlk satır"><GFirst /></NavButton>
                    <NavButton label="Önceki satır"><GPrev /></NavButton>
                    <span className="w-[34px] bg-[#e1eeff] text-center leading-[28px] text-[#0b1f77]">0 / 0</span>
                    <NavButton label="Sonraki satır"><GNext /></NavButton>
                    <NavButton label="Son satır"><GLast /></NavButton>
                    <NavButton label="Satırı düzenle"><GUp /></NavButton>
                    <NavButton label="Satırı onayla"><GCheck /></NavButton>
                    <NavButton label="Satırı iptal et"><GCross /></NavButton>
                    <NavButton label="Satırları yenile"><GRedo /></NavButton>
                    <button type="button" aria-label="Tablo ayarları" className="flex w-5 items-center justify-center"><GTable /></button>
                  </div>
                  <div className="ml-[50px] flex flex-1 items-center justify-between bg-linear-to-b from-[#f8f8f8] to-[#ebebeb] to-40% px-[5px] text-[#95a3c6]">
                    <ArrowL />
                    <ArrowR />
                  </div>
                </div>
              </div>
              <div className="mt-[5px] flex h-5 items-center border border-[#5b8fd0] bg-linear-to-b from-[#dfecff] to-[#a9cdfb] pl-px text-[#0b1f77]">
                <button type="button" aria-label="Ayrıntıları aç" className="flex size-4 items-center justify-center rounded-xs border border-[#7d9cc8] bg-[#e6f0fd]">
                  <svg width="8" height="9" viewBox="0 0 8 9" aria-hidden="true"><path d="M1 .8l3 3 3-3M1 4.800l3 3 3-3" fill="none" stroke="#000" strokeWidth="1.500" /></svg>
                </button>
                <span className="ml-3.5">Ayrıntılar</span>
              </div>
            </section>
          </div>
        </div>
      </main>
    </div>
  );
}
